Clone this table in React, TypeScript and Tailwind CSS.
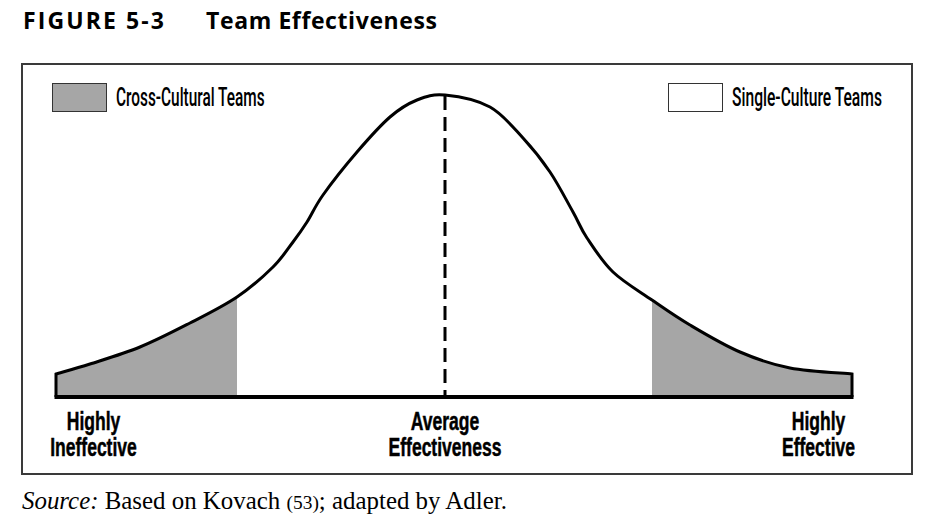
type Pt = [number, number];

// curve traced off the figure, page coordinates
const pts: Pt[] = [
  [56, 374], [90, 364], [140, 347], [190, 323], [237, 297], [273, 267], [293, 242], [307, 222],
  [323, 195], [357, 152], [390, 117], [417, 100], [445, 95], [490, 107], [523, 138], [550, 172],
  [573, 212], [587, 238], [613, 272], [652, 300], [690, 325], [740, 352], [790, 368], [852, 374],
];

const f = (n: number) => n.toFixed(1);

function segs(from: number, to: number) {
  let d = "";
  for (let i = from; i < to; i++) {
    const p0 = pts[i - 1] || pts[i];
    const p1 = pts[i];
    const p2 = pts[i + 1];
    const p3 = pts[i + 2] || p2;
    const c1 = [p1[0] + (p2[0] - p0[0]) / 6, p1[1] + (p2[1] - p0[1]) / 6];
    const c2 = [p2[0] - (p3[0] - p1[0]) / 6, p2[1] - (p3[1] - p1[1]) / 6];
    d += ` C ${f(c1[0])} ${f(c1[1])} ${f(c2[0])} ${f(c2[1])} ${p2[0]} ${p2[1]}`;
  }
  return d;
}

const BASE = 397;
const last = pts.length - 1;

function Curve() {
  const leftFill = `M 56 ${BASE} L 56 374${segs(0, 4)} L 237 ${BASE} Z`;
  const rightFill = `M 652 ${BASE} L 652 300${segs(19, last)} L 852 ${BASE} Z`;
  const outline = `M 56 ${BASE} L 56 374${segs(0, last)} L 852 ${BASE}`;
  return (
    <svg viewBox="23 65 888 335" width={888} height={335} className="block">
      <path d={leftFill} fill="#a6a6a6" />
      <path d={rightFill} fill="#a6a6a6" />
      <path d={outline} fill="none" stroke="#000" strokeWidth={3} strokeLinejoin="miter" />
      <line x1={445} y1={96} x2={445} y2={395} stroke="#000" strokeWidth={3} strokeDasharray="14 7" />
      <line x1={54.5} y1={BASE} x2={853.5} y2={BASE} stroke="#000" strokeWidth={4} />
    </svg>
  );
}

function Legend({ shade, label, scale }: { shade: string; label: string; scale: string }) {
  return (
    <div className="flex items-center gap-[9px]">
      <div className={`h-[29px] w-[55px] border-[1.5px] border-[#333] ${shade}`} />
      <div className="w-[151px] overflow-hidden font-['Roboto','Liberation_Sans',sans-serif] text-[25px] font-medium leading-[29px] text-black">
        <span className={`inline-block origin-left whitespace-nowrap ${scale}`}>{label}</span>
      </div>
    </div>
  );
}

export default function App() {
  return (
    <div className="h-[526px] w-[925px] bg-white text-black">
      <h1 className="flex gap-[40px] pl-[23px] pt-[9px] font-['Open_Sans','Lato',sans-serif] text-[23px] font-bold leading-[23px] tracking-[0.6px]">
        <span className="tracking-[2.1px]">FIGURE 5-3</span>
        <span>Team Effectiveness</span>
      </h1>

      <div className="relative ml-[21px] mt-[31px] flex h-[412px] w-[892px] flex-col border-2 border-[#3a3a3a] font-['Liberation_Sans',Arial,sans-serif]">
        <Curve />

        <div className="absolute left-[29px] top-[18px]">
          <Legend shade="bg-[#a6a6a6]" label="Cross-Cultural Teams" scale="scale-x-[0.615]" />
        </div>
        <div className="absolute right-[28px] top-[18px]">
          <Legend shade="bg-white" label="Single-Culture Teams" scale="scale-x-[0.625]" />
        </div>

        <div className="mt-[8px] grid grid-cols-[141px_562px_185px] text-center text-[25px] font-bold leading-[26px] [-webkit-text-stroke:0.5px_black]">
          <div className="scale-x-[0.7] whitespace-nowrap">
            <div>Highly</div>
            <div>Ineffective</div>
          </div>
          <div className="scale-x-[0.7] whitespace-nowrap">
            <div>Average</div>
            <div>Effectiveness</div>
          </div>
          <div className="scale-x-[0.7] whitespace-nowrap">
            <div>Highly</div>
            <div>Effective</div>
          </div>
        </div>
      </div>

      <p className="mt-[13px] pl-[22px] font-['Liberation_Serif','Times_New_Roman',serif] text-[24.9px] leading-[25px]">
        <em>Source:</em> Based on Kovach <span className="text-[0.78em]">(53)</span>; adapted by Adler.
      </p>
    </div>
  );
}
